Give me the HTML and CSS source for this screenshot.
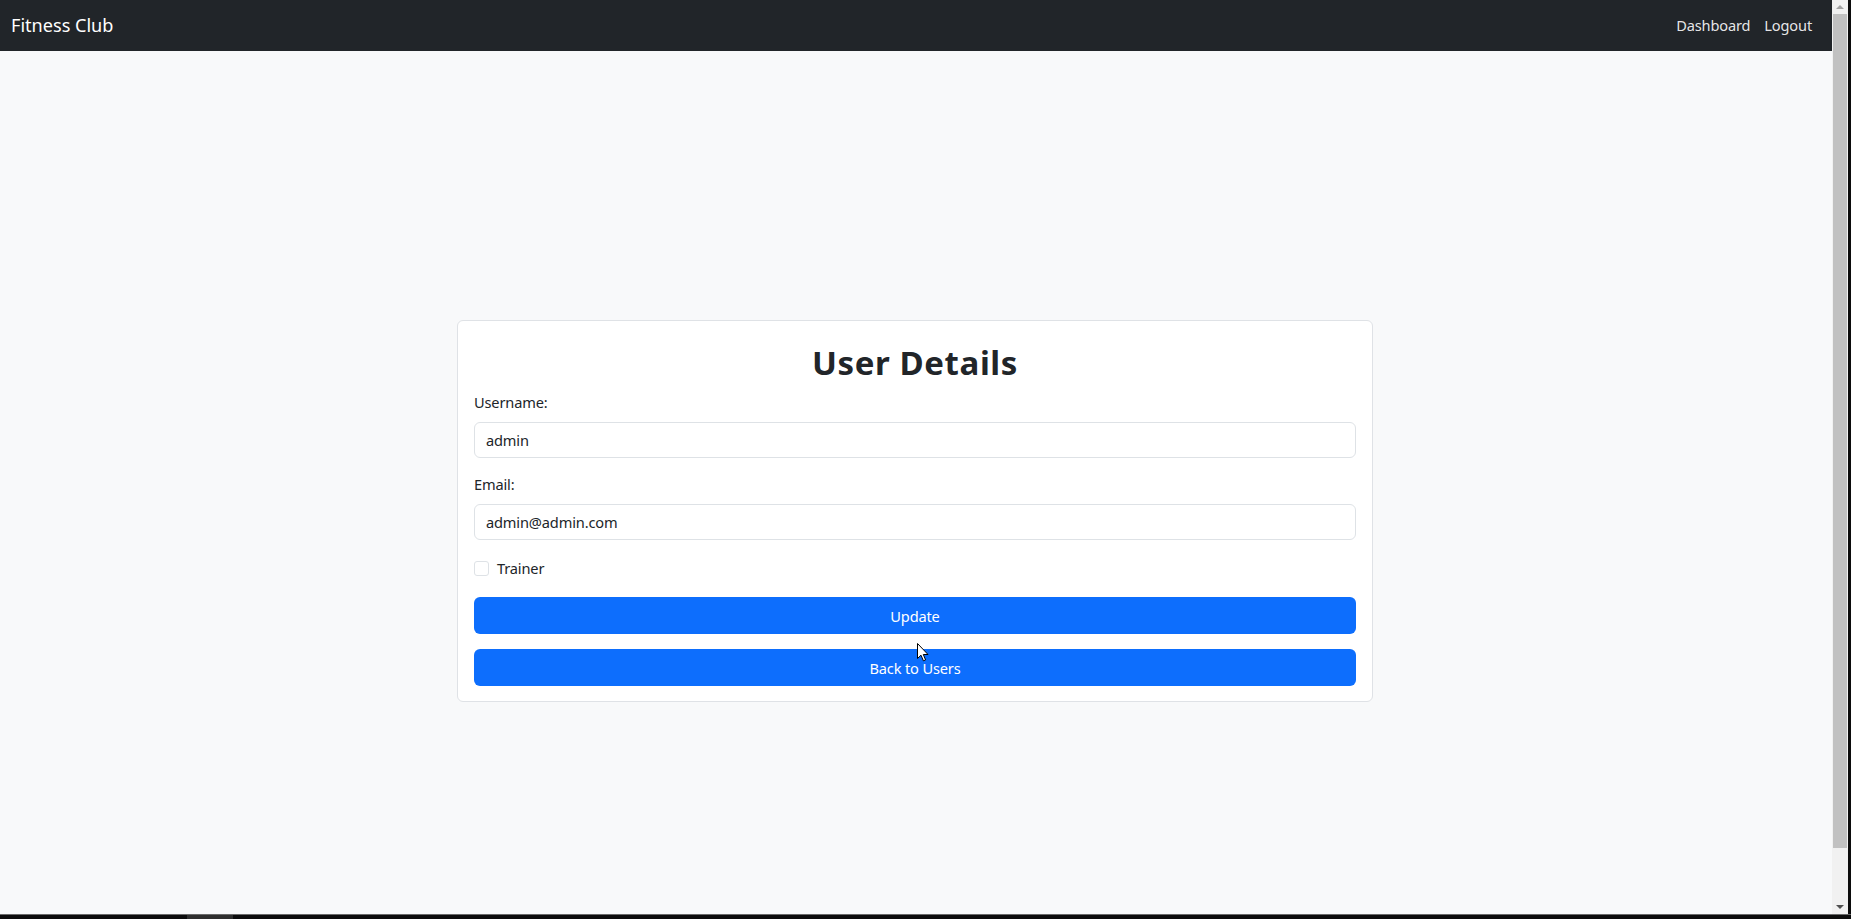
FILE: index.html
```html
<!DOCTYPE html>
<html lang="en">
<head>
<meta charset="utf-8">
<title>User Details</title>
<link rel="stylesheet" href="styles.css">
</head>
<body>
<div class="screen">
  <div class="viewport">
    <div class="page">
      <nav class="navbar">
        <a class="brand" href="#">Fitness Club</a>
        <div class="nav-links">
          <a class="nav-link" href="#">Dashboard</a>
          <a class="nav-link" href="#">Logout</a>
        </div>
      </nav>
      <main class="main">
        <div class="card">
          <h2 class="card-title">User Details</h2>
          <form class="form">
            <div class="field">
              <label class="form-label" for="username">Username:</label>
              <input class="form-control" id="username" type="text" value="admin">
            </div>
            <div class="field">
              <label class="form-label" for="email">Email:</label>
              <input class="form-control" id="email" type="email" value="admin@admin.com">
            </div>
            <div class="form-check">
              <span class="check-box"></span>
              <label class="check-label">Trainer</label>
            </div>
            <button class="btn btn-update" type="button">Update</button>
            <button class="btn btn-back" type="button">Back to Users</button>
          </form>
          <svg class="cursor" width="12" height="19" viewBox="0 0 12 19" aria-hidden="true">
            <path d="M0.5 0.5 L0.5 15.5 L4 12.2 L6.4 17.8 L8.6 16.9 L6.3 11.5 L11 11.5 Z" fill="#fff" stroke="#000" stroke-width="1" stroke-linejoin="round"/>
          </svg>
        </div>
      </main>
    </div>
    <div class="scrollbar">
      <div class="sb-arrow sb-up"></div>
      <div class="sb-track">
        <div class="sb-thumb"></div>
      </div>
      <div class="sb-arrow sb-down"></div>
    </div>
    <div class="edge"></div>
  </div>
  <div class="bottom-bar">
    <div class="bottom-mark"></div>
  </div>
</div>
</body>
</html>
```

FILE: styles.css
```css
* {
  box-sizing: border-box;
}

html, body {
  margin: 0;
  padding: 0;
  height: 100%;
  overflow: hidden;
}

body {
  font-family: "Noto Sans", "Open Sans", sans-serif;
  font-size: 14.6px;
  letter-spacing: -0.15px;
  line-height: 22.5px;
  color: #212529;
  background: #0c0c0c;
}

.screen {
  width: 1851px;
  height: 919px;
  display: flex;
  flex-direction: column;
}

.viewport {
  height: 914px;
  display: flex;
  flex-direction: row;
}

.page {
  width: 1832px;
  height: 100%;
  background: #f8f9fa;
  display: flex;
  flex-direction: column;
}

/* Navbar */
.navbar {
  height: 51px;
  flex: none;
  background: #212529;
  display: flex;
  align-items: center;
  justify-content: space-between;
  padding: 0 13px 0 11px;
}

.brand {
  color: #ffffff;
  text-decoration: none;
  font-size: 18.1px;
  letter-spacing: 0;
  line-height: 1;
  padding-bottom: 1px;
}

.nav-links {
  display: flex;
}

.nav-link {
  color: rgba(255, 255, 255, 0.9);
  text-decoration: none;
  padding: 0 7px;
  line-height: 1;
}

/* Main */
.main {
  flex: 1;
  display: flex;
  flex-direction: column;
  align-items: center;
  padding: 269px 2px 0 0;
}

.card {
  position: relative;
  width: 916px;
  background: #ffffff;
  border: 1px solid #dfe2e6;
  border-radius: 6px;
  padding: 23px 16px 15px;
}

.card-title {
  margin: 0 0 9px;
  text-align: center;
  font-size: 33px;
  letter-spacing: 0.6px;
  font-weight: 700;
  line-height: 38.4px;
  color: #212529;
}

.form {
  display: flex;
  flex-direction: column;
}

.field {
  display: flex;
  flex-direction: column;
  margin-bottom: 15.5px;
}

.form-label {
  display: block;
  margin-bottom: 8px;
}

.form-control {
  display: block;
  width: 100%;
  height: 36px;
  padding: 0 11px;
  font-family: inherit;
  font-size: 14.6px;
  letter-spacing: -0.15px;
  color: #212529;
  background: #ffffff;
  border: 1px solid #dee2e6;
  border-radius: 6px;
  outline: none;
}

.form-check {
  display: flex;
  align-items: center;
  gap: 8px;
  height: 22.5px;
  margin: 2px 0 17.5px;
}

.check-box {
  width: 15px;
  height: 15px;
  border: 1px solid #dee2e6;
  border-radius: 3px;
  background: #ffffff;
  flex: none;
}

.btn {
  display: block;
  width: 100%;
  height: 37px;
  border: 0;
  border-radius: 6px;
  background: #0d6efd;
  color: #ffffff;
  font-family: inherit;
  font-size: 14.6px;
  letter-spacing: -0.15px;
  text-align: center;
  padding: 0;
}

.btn-update {
  margin-bottom: 15px;
}

.cursor {
  position: absolute;
  left: 459px;
  top: 322px;
}

/* Scrollbar */
.scrollbar {
  width: 16px;
  height: 100%;
  background: #f1f1f1;
  display: flex;
  flex-direction: column;
}

.sb-arrow {
  height: 14px;
  flex: none;
  display: flex;
  align-items: center;
  justify-content: center;
}

.sb-up::before {
  content: "";
  border-left: 4px solid transparent;
  border-right: 4px solid transparent;
  border-bottom: 4px solid #a3a3a3;
}

.sb-down::before {
  content: "";
  border-left: 4px solid transparent;
  border-right: 4px solid transparent;
  border-top: 4px solid #505050;
}

.sb-track {
  flex: 1;
  padding: 0 1px 52px;
}

.sb-thumb {
  height: 100%;
  background: #c1c1c1;
}

.edge {
  width: 3px;
  height: 100%;
  background: #0c0c0c;
}

.bottom-bar {
  height: 5px;
  background: #0c0c0c;
  border-top: 1px solid #6a6a6a;
  padding-left: 187px;
}

.bottom-mark {
  width: 46px;
  height: 4px;
  background: #2e2e2e;
}
```
